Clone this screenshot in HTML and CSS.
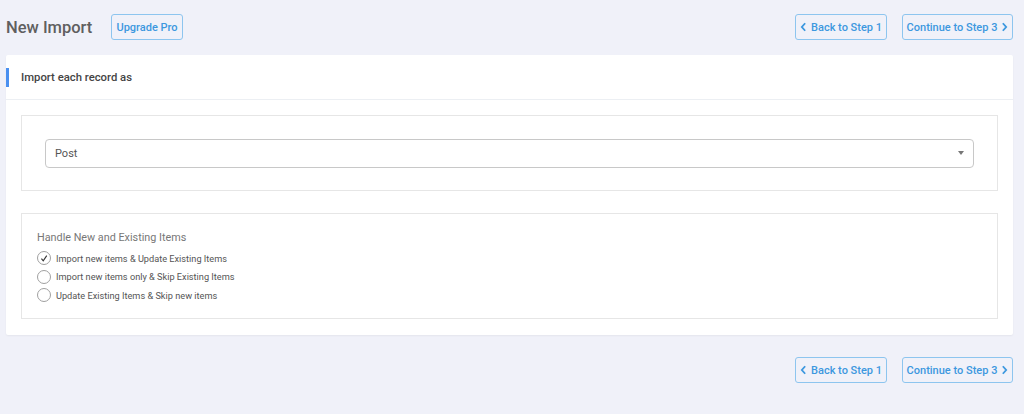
FILE: index.html
```html
<!DOCTYPE html>
<html lang="en">
<head>
  <meta charset="UTF-8" />
  <title>New Import</title>
  <link rel="stylesheet" href="styles.css">
</head>
<body>
  <div class="wrap">
    <header class="top">
      <h1 class="title">New Import</h1>
      <a href="#" class="btn btn-pro">Upgrade Pro</a>
      <div class="steps">
        <a href="#" class="btn btn-back"><svg class="chev" viewBox="0 0 8 12" width="7" height="10"><path d="M6 1.5 L2 6 L6 10.5" fill="none" stroke="currentColor" stroke-width="2.2"/></svg>Back to Step 1</a>
        <a href="#" class="btn btn-next">Continue to Step 3<svg class="chev" viewBox="0 0 8 12" width="7" height="10"><path d="M2 1.5 L6 6 L2 10.5" fill="none" stroke="currentColor" stroke-width="2.2"/></svg></a>
      </div>
    </header>

    <section class="card">
      <div class="card-head">Import each record as</div>
      <div class="card-body">
        <div class="box box-select">
          <div class="select">
            <span>Post</span>
            <span class="caret"></span>
          </div>
        </div>
        <div class="box box-options">
          <h3>Handle New and Existing Items</h3>
          <label class="opt"><span class="radio">
            <svg viewBox="0 0 14 14" width="13" height="13"><path d="M4 7.2 L6.1 9.8 L10.2 3.6" fill="none" stroke="#333" stroke-width="1.3"/></svg>
          </span>Import new items &amp; Update Existing Items</label>
          <label class="opt"><span class="radio"></span>Import new items only &amp; Skip Existing Items</label>
          <label class="opt"><span class="radio"></span>Update Existing Items &amp; Skip new items</label>
        </div>
      </div>
    </section>

    <footer class="bottom">
      <a href="#" class="btn btn-back"><svg class="chev" viewBox="0 0 8 12" width="7" height="10"><path d="M6 1.5 L2 6 L6 10.5" fill="none" stroke="currentColor" stroke-width="2.2"/></svg>Back to Step 1</a>
      <a href="#" class="btn btn-next">Continue to Step 3<svg class="chev" viewBox="0 0 8 12" width="7" height="10"><path d="M2 1.5 L6 6 L2 10.5" fill="none" stroke="currentColor" stroke-width="2.2"/></svg></a>
    </footer>
  </div>
</body>
</html>
```

FILE: styles.css
```css
body {
  margin: 0;
  background: #f0f1f9;
  font-family: Roboto, "Liberation Sans", sans-serif;
  color: #555;
}
.wrap {
  width: 1007px;
  padding-left: 6px;
}
.top {
  display: flex;
  align-items: center;
  height: 54px;
  padding-bottom: 1px;
}
.title {
  margin: 0;
  font-size: 16.5px;
  font-weight: 500;
  color: #5f5f5f;
  width: 105px;
}
.btn {
  box-sizing: border-box;
  display: inline-flex;
  align-items: center;
  justify-content: center;
  gap: 4px;
  height: 26px;
  padding: 0 5px;
  border: 1px solid #8dc5ef;
  border-radius: 3px;
  color: #3d98df;
  font-size: 11px;
  font-weight: 500;
  white-space: nowrap;
  text-decoration: none;
}
.btn-pro {
  width: 72px;
}
.btn-back {
  width: 92px;
}
.btn-next {
  width: 111px;
}
.chev {
  flex: none;
}
.steps {
  margin-left: auto;
  display: flex;
  gap: 15px;
}
.card {
  background: #fff;
  border-radius: 2px;
  box-shadow: 0 1px 2px rgba(0, 0, 0, 0.05);
}
.card-head {
  position: relative;
  height: 45px;
  box-sizing: border-box;
  display: flex;
  align-items: center;
  padding-left: 15px;
  border-bottom: 1px solid #eceff3;
  font-size: 11.3px;
  font-weight: 500;
  color: #444;
}
.card-head::before {
  content: "";
  position: absolute;
  left: 0;
  top: 13px;
  width: 3px;
  height: 19px;
  background: #4a90f0;
}
.card-body {
  padding: 15px 15px 16px 15px;
  display: flex;
  flex-direction: column;
  gap: 22px;
}
.box {
  border: 1px solid #e6e6e6;
}
.box-select {
  height: 74px;
  padding: 0 23px;
  display: flex;
  align-items: center;
}
.select {
  flex: 1;
  height: 27px;
  border: 1px solid #c8c8c8;
  border-radius: 4px;
  display: flex;
  align-items: center;
  justify-content: space-between;
  padding: 0 9px;
  font-size: 11px;
  color: #555;
}
.caret {
  width: 0;
  height: 0;
  border-left: 3px solid transparent;
  border-right: 3px solid transparent;
  border-top: 4px solid #777;
}
.box-options {
  height: 106px;
  padding: 17px 15px 0;
  box-sizing: border-box;
}
.box-options h3 {
  margin: 0 0 5px;
  font-size: 10.8px;
  font-weight: 400;
  color: #777;
}
.opt {
  display: flex;
  align-items: center;
  gap: 5px;
  height: 18.5px;
  font-size: 9.2px;
  color: #555;
}
.radio {
  width: 12px;
  height: 12px;
  border: 1px solid #a0a0a0;
  border-radius: 50%;
  display: flex;
  align-items: center;
  justify-content: center;
}
.bottom {
  display: flex;
  justify-content: flex-end;
  gap: 15px;
  padding-top: 22px;
}
```
